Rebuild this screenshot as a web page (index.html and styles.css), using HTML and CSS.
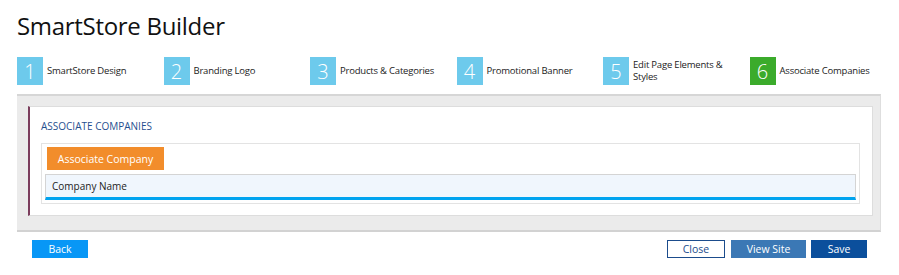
FILE: index.html
```html
<!DOCTYPE html>
<html lang="en">
<head>
    <meta charset="UTF-8">
    <title>SmartStore Builder</title>
    <link rel="stylesheet" href="styles.css">
</head>
<body>
    <div class="page">
        <h1>SmartStore Builder</h1>

        <div class="steps">
            <div class="step"><span class="step-num">1</span><span class="step-label">SmartStore Design</span></div>
            <div class="step"><span class="step-num">2</span><span class="step-label">Branding Logo</span></div>
            <div class="step"><span class="step-num">3</span><span class="step-label">Products &amp; Categories</span></div>
            <div class="step"><span class="step-num">4</span><span class="step-label">Promotional Banner</span></div>
            <div class="step"><span class="step-num">5</span><span class="step-label">Edit Page Elements &amp; Styles</span></div>
            <div class="step active"><span class="step-num">6</span><span class="step-label">Associate Companies</span></div>
        </div>

        <div class="panel">
            <div class="card">
                <h2 class="card-title">Associate Companies</h2>
                <div class="grid-box">
                    <button class="btn-orange">Associate Company</button>
                    <div class="grid-header">Company Name</div>
                </div>
            </div>
        </div>

        <div class="footer">
            <button class="btn btn-back">Back</button>
            <div class="footer-right">
                <button class="btn btn-close">Close</button>
                <button class="btn btn-view">View Site</button>
                <button class="btn btn-save">Save</button>
            </div>
        </div>
    </div>
</body>
</html>
```

FILE: styles.css
```css
* {
    margin: 0;
    padding: 0;
    box-sizing: border-box;
    font-family: 'Open Sans', 'DejaVu Sans', sans-serif;
}

body {
    background-color: #ffffff;
    color: #222222;
}

.page {
    width: 881px;
    padding-left: 17px;
}

h1 {
    font-size: 24px;
    font-weight: 400;
    letter-spacing: -0.3px;
    line-height: 34px;
    margin-top: 9px;
    color: #111111;
}

.steps {
    display: grid;
    grid-template-columns: repeat(6, 146.5px);
    margin-top: 14px;
    height: 28px;
}

.step {
    display: flex;
    align-items: center;
    gap: 4px;
}

.step-num {
    width: 26px;
    height: 28px;
    flex-shrink: 0;
    background-color: #6dcaec;
    color: #ffffff;
    font-size: 20px;
    font-weight: 300;
    display: flex;
    align-items: center;
    justify-content: center;
}

.step.active .step-num {
    background-color: #3bab2b;
}

.step-label {
    font-size: 9.5px;
    letter-spacing: -0.2px;
    line-height: 12px;
    max-width: 96px;
    color: #222222;
}

.panel {
    margin-top: 9px;
    background-color: #ebebeb;
    border-top: 2px solid #d6d6d6;
    border-bottom: 2px solid #d2d2d2;
    border-right: 1px solid #dedede;
    padding: 10px 7px 14px 11px;
}

.card {
    background-color: #ffffff;
    border: 1px solid #dddddd;
    border-left: 2px solid #7b3d5c;
    padding: 12px 12px 11px 11px;
}

.card-title {
    font-size: 10px;
    font-weight: 400;
    text-transform: uppercase;
    color: #1f4f8f;
    line-height: 14px;
    margin-bottom: 10px;
}

.grid-box {
    border: 1px solid #e3e3e3;
    padding: 3px;
    display: flex;
    flex-direction: column;
    align-items: flex-start;
    gap: 4px;
}

.btn-orange {
    margin-left: 2px;
    width: 117px;
    height: 23px;
    border: none;
    background-color: #f28d2b;
    color: #ffffff;
    font-size: 10.5px;
}

.grid-header {
    width: 100%;
    height: 26px;
    background-color: #f0f6fd;
    border: 1px solid #d4d4d4;
    border-bottom: 3px solid #00a3ef;
    font-size: 10px;
    color: #222222;
    padding-left: 6px;
    display: flex;
    align-items: center;
}

.footer {
    margin-top: 8px;
    padding: 0 14px 0 15px;
    display: flex;
    justify-content: space-between;
}

.footer-right {
    display: flex;
    gap: 5px;
}

.btn {
    height: 18px;
    border: none;
    font-size: 10.5px;
    color: #ffffff;
}

.btn-back {
    width: 56px;
    background-color: #0897f6;
}

.btn-close {
    width: 58px;
    background-color: #ffffff;
    border: 1px solid #1b4c8c;
    color: #1b4c8c;
    margin-right: 1px;
}

.btn-view {
    width: 75px;
    background-color: #3b78b5;
}

.btn-save {
    width: 56px;
    background-color: #0b4f9c;
}
```
